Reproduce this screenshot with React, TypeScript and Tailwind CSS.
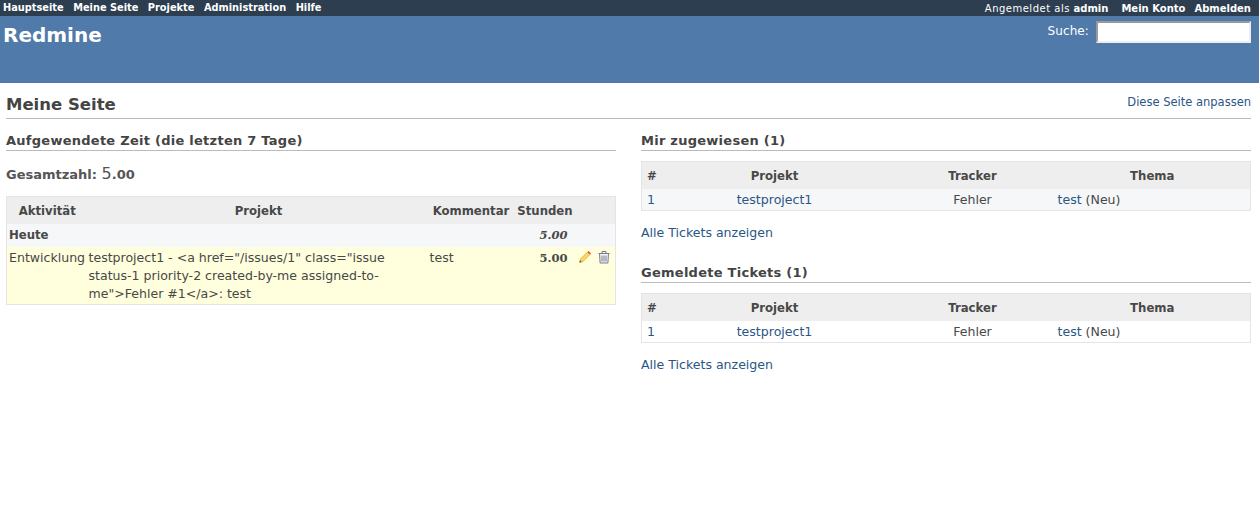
const font = "font-['DejaVu_Sans',sans-serif]";

function Pencil() {
  return (
    <svg width="14" height="14" viewBox="0 0 14 14">
      <path d="M1.5 12.5l1-3.5 7-7 2.5 2.5-7 7z" fill="#f8d765" stroke="#e0a030" strokeWidth="0.7" />
      <path d="M9.5 2l1-1 2.5 2.5-1 1z" fill="#e04040" />
      <path d="M1.5 12.5l.6-2.2 1.6 1.6z" fill="#6b5a3a" />
    </svg>
  );
}

function Trash() {
  return (
    <svg width="14" height="14" viewBox="0 0 14 14" fill="none" stroke="#777c94">
      <path d="M1.5 3.5h11M5 3.5V1.5h4v2" />
      <path d="M2.5 3.5l.6 9.5h7.8l.6-9.5z" fill="#f3f3f6" />
      <path d="M5 5.5v6M7 5.5v6M9 5.5v6" />
    </svg>
  );
}

function IssueBlock({ title, rowClass }: { title: string; rowClass: string }) {
  return (
    <div className="mb-[23px]">
      <h3 className="border-b border-[#bbb] text-[13px] leading-[17px] font-bold tracking-[0.26px] text-[#444] pb-[1px] mb-[10px]">
        {title}
      </h3>
      <table className="w-full table-fixed border border-[#e4e4e4] border-collapse text-[12.55px]">
        <thead>
          <tr className="bg-[#eee] h-[27px] text-[#484848] text-[11.7px]">
            <th className="w-[17px] text-left pl-[5px] pt-[4px] font-bold">#</th>
            <th className="w-[232px] pt-[4px] font-bold">Projekt</th>
            <th className="w-[164px] pt-[4px] font-bold">Tracker</th>
            <th className="pt-[4px] font-bold">Thema</th>
          </tr>
        </thead>
        <tbody>
          <tr className={`${rowClass} h-[22px] leading-[16px]`}>
            <td className="pl-[5px] pt-[2px] text-[#2a5685]">1</td>
            <td className="pt-[2px] text-center">
              <a className="text-[#2a5685]">testproject1</a>
            </td>
            <td className="pt-[2px] text-center text-[#484848]">Fehler</td>
            <td className="pl-[3px] pt-[2px] text-[#484848]">
              <a className="text-[#2a5685]">test</a> (Neu)
            </td>
          </tr>
        </tbody>
      </table>
      <p className="mt-[14px] text-[12.55px] leading-[16px]">
        <a className="text-[#2a5685]">Alle Tickets anzeigen</a>
      </p>
    </div>
  );
}

export default function App() {
  return (
    <div className={`${font} min-h-[511px] bg-white text-[12px] text-[#484848]`}>
      <div className="flex h-[16px] items-center justify-between bg-[#2c3e50] pl-[3px] pr-[8px] text-[9.8px] text-white">
        <ul className="flex gap-[9.5px] font-bold">
          <li>Hauptseite</li>
          <li>Meine Seite</li>
          <li>Projekte</li>
          <li>Administration</li>
          <li>Hilfe</li>
        </ul>
        <div className="flex gap-[13px] text-[10px]">
          <span className="tracking-[0.5px]">
            Angemeldet als <b className="tracking-normal">admin</b>
          </span>
          <ul className="flex gap-[9px] font-bold">
            <li>Mein Konto</li>
            <li>Abmelden</li>
          </ul>
        </div>
      </div>

      <div className="flex h-[67px] justify-between bg-[#507aaa] pl-[3px] pr-[8px] text-white">
        <h1 className="pt-[5px] text-[20px] leading-[28px] font-bold">Redmine</h1>
        <div className="flex items-start gap-[7px] pt-[5px]">
          <span className="text-[12px] leading-[20px] tracking-[0.1px]">Suche:</span>
          <input className="h-[22px] w-[155px] border-2 border-t-[#999] border-l-[#999] border-r-[#eee] border-b-[#eee] bg-white" />
        </div>
      </div>

      <div className="pl-[6px] pr-[8px]">
        <div className="flex h-[36px] items-end justify-between border-b border-[#bbb]">
          <h2 className="pb-[2px] text-[16.5px] leading-[22px] font-bold text-[#444]">Meine Seite</h2>
          <a className="pb-[9px] text-[11.5px] leading-[14px] text-[#2a5685]">Diese Seite anpassen</a>
        </div>

        <div className="mt-[13px] grid grid-cols-[610px_610px] gap-[25px]">
          <div>
            <h3 className="border-b border-[#bbb] text-[13px] leading-[17px] font-bold tracking-[0.26px] text-[#444] pb-[1px]">
              Aufgewendete Zeit (die letzten 7 Tage)
            </h3>
            <p className="mt-[14px] mb-[12px] text-[13px] font-bold text-[#555] leading-[18px]">
              Gesamtzahl: <span className="font-normal text-[16px]">5</span>.00
            </p>
            <table className="w-full table-fixed border border-[#e4e4e4] border-collapse text-[12.55px]">
              <thead>
                <tr className="bg-[#eee] h-[27px] text-[#484848] text-[11.7px]">
                  <th className="w-[81px] pt-[4px] font-bold">Aktivität</th>
                  <th className="w-[342px] pt-[4px] font-bold">Projekt</th>
                  <th className="w-[83px] pt-[4px] font-bold">Kommentar</th>
                  <th className="w-[65px] pt-[4px] font-bold">Stunden</th>
                  <th />
                </tr>
              </thead>
              <tbody>
                <tr className="bg-[#f6f7f8] h-[23px] font-bold text-[11.7px]">
                  <td className="pl-[2px] pt-[2px]">Heute</td>
                  <td />
                  <td />
                  <td className="pt-[2px] pr-[10px] text-right font-['DejaVu_Serif',serif] italic text-[11.5px]">5.00</td>
                  <td />
                </tr>
                <tr className="bg-[#ffffdd] align-top leading-[18px]">
                  <td className="pl-[2px] pt-[2px] whitespace-nowrap">Entwicklung</td>
                  <td className="pt-[2px] pl-[1px] pb-[1px]">
                    <div className="max-w-[310px]">
                      testproject1 - &lt;a href="/issues/1" class="issue status-1 priority-2 created-by-me assigned-to-me"&gt;Fehler #1&lt;/a&gt;: test
                    </div>
                  </td>
                  <td className="pt-[2px]">test</td>
                  <td className="pt-[2px] pr-[10px] text-right font-bold text-[11.5px] font-['DejaVu_Serif',serif]">5.00</td>
                  <td className="pt-[3px]">
                    <span className="flex gap-[5px]">
                      <Pencil />
                      <Trash />
                    </span>
                  </td>
                </tr>
              </tbody>
            </table>
          </div>
          <div>
            <IssueBlock title="Mir zugewiesen (1)" rowClass="bg-[#f6f7f8]" />
            <IssueBlock title="Gemeldete Tickets (1)" rowClass="bg-white" />
          </div>
        </div>
      </div>
    </div>
  );
}
